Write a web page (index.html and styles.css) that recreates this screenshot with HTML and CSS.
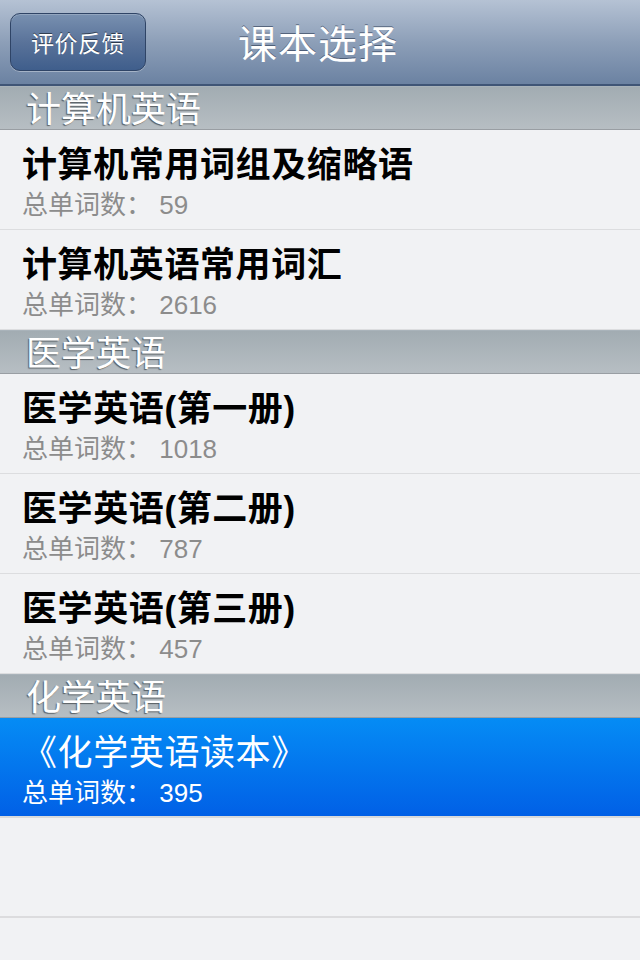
FILE: index.html
```html
<!DOCTYPE html>
<html lang="zh-CN">
<head>
    <meta charset="UTF-8">
    <meta name="viewport" content="width=device-width, initial-scale=1.0">
    <title>课本选择</title>
    <link rel="stylesheet" href="styles.css">
</head>
<body>
    <header class="navbar">
        <button class="nav-btn">评价反馈</button>
        <h1>课本选择</h1>
    </header>

    <section class="list">
        <div class="group-title">计算机英语</div>
        <div class="row">
            <div class="row-title">计算机常用词组及缩略语</div>
            <div class="row-sub">总单词数： 59</div>
        </div>
        <div class="row">
            <div class="row-title">计算机英语常用词汇</div>
            <div class="row-sub">总单词数： 2616</div>
        </div>

        <div class="group-title">医学英语</div>
        <div class="row">
            <div class="row-title">医学英语(第一册)</div>
            <div class="row-sub">总单词数： 1018</div>
        </div>
        <div class="row">
            <div class="row-title">医学英语(第二册)</div>
            <div class="row-sub">总单词数： 787</div>
        </div>
        <div class="row">
            <div class="row-title">医学英语(第三册)</div>
            <div class="row-sub">总单词数： 457</div>
        </div>

        <div class="group-title">化学英语</div>
        <div class="row selected">
            <div class="row-title">《化学英语读本》</div>
            <div class="row-sub">总单词数： 395</div>
        </div>

        <!-- lignes vides du tableau -->
        <div class="row empty"></div>
    </section>
</body>
</html>
```

FILE: styles.css
```css
body {
    margin: 0;
    width: 640px;
    height: 960px;
    overflow: hidden;
    font-family: "Liberation Sans", "Noto Sans CJK SC", sans-serif;
    background-color: #f1f2f4;
}

.navbar {
    height: 86px;
    box-sizing: border-box;
    border-bottom: 2px solid #3f5576;
    background: linear-gradient(#b5c2d4, #8d9fb8 50%, #6b82a2);
    display: flex;
    align-items: center;
}

.navbar h1 {
    flex: 1;
    margin: 0 0 3px 0;
    padding-right: 150px;
    text-align: center;
    font-size: 39px;
    font-weight: normal;
    letter-spacing: 1px;
    color: #fff;
    text-shadow: 0 -1px 0 rgba(40, 55, 80, 0.6);
}

.nav-btn {
    margin-left: 10px;
    width: 136px;
    height: 58px;
    border: 1px solid #2f4466;
    border-radius: 10px;
    background: linear-gradient(#7890b0, #5a739a 50%, #3f5e8c);
    box-shadow: 0 1px 0 rgba(255, 255, 255, 0.35), inset 0 1px 0 rgba(255, 255, 255, 0.2);
    font-family: "Noto Sans CJK SC", sans-serif;
    font-size: 23px;
    letter-spacing: 0.5px;
    color: #fff;
    text-shadow: 0 -1px 0 rgba(0, 0, 0, 0.5);
    padding: 0;
}

.group-title {
    height: 44px;
    box-sizing: border-box;
    border-top: 1px solid #a9b3ba;
    border-bottom: 1px solid #999ea3;
    background: linear-gradient(#a2acb2, #b7bec3);
    padding: 2px 0 0 26px;
    font-size: 35px;
    line-height: 41px;
    color: #fff;
    text-shadow: -1px 1px 1px rgba(50, 55, 60, 0.7);
}

.row {
    height: 100px;
    box-sizing: border-box;
    border-bottom: 1px solid #dcdddf;
    padding: 15px 0 0 22px;
}

.row-title {
    font-size: 35px;
    line-height: 40px;
    font-weight: bold;
    letter-spacing: 0.6px;
    color: #000;
}

.row-sub {
    font-size: 26px;
    line-height: 40px;
    color: #8c8c8c;
}

.row.selected {
    background: linear-gradient(#058cf5, #0160e6);
    border-bottom: 2px solid #d8dadc;
}

.row.selected .row-title,
.row.selected .row-sub {
    color: #fff;
    font-weight: normal;
}

.row.empty {
    border-bottom: 2px solid #dcdcde;
}
```
